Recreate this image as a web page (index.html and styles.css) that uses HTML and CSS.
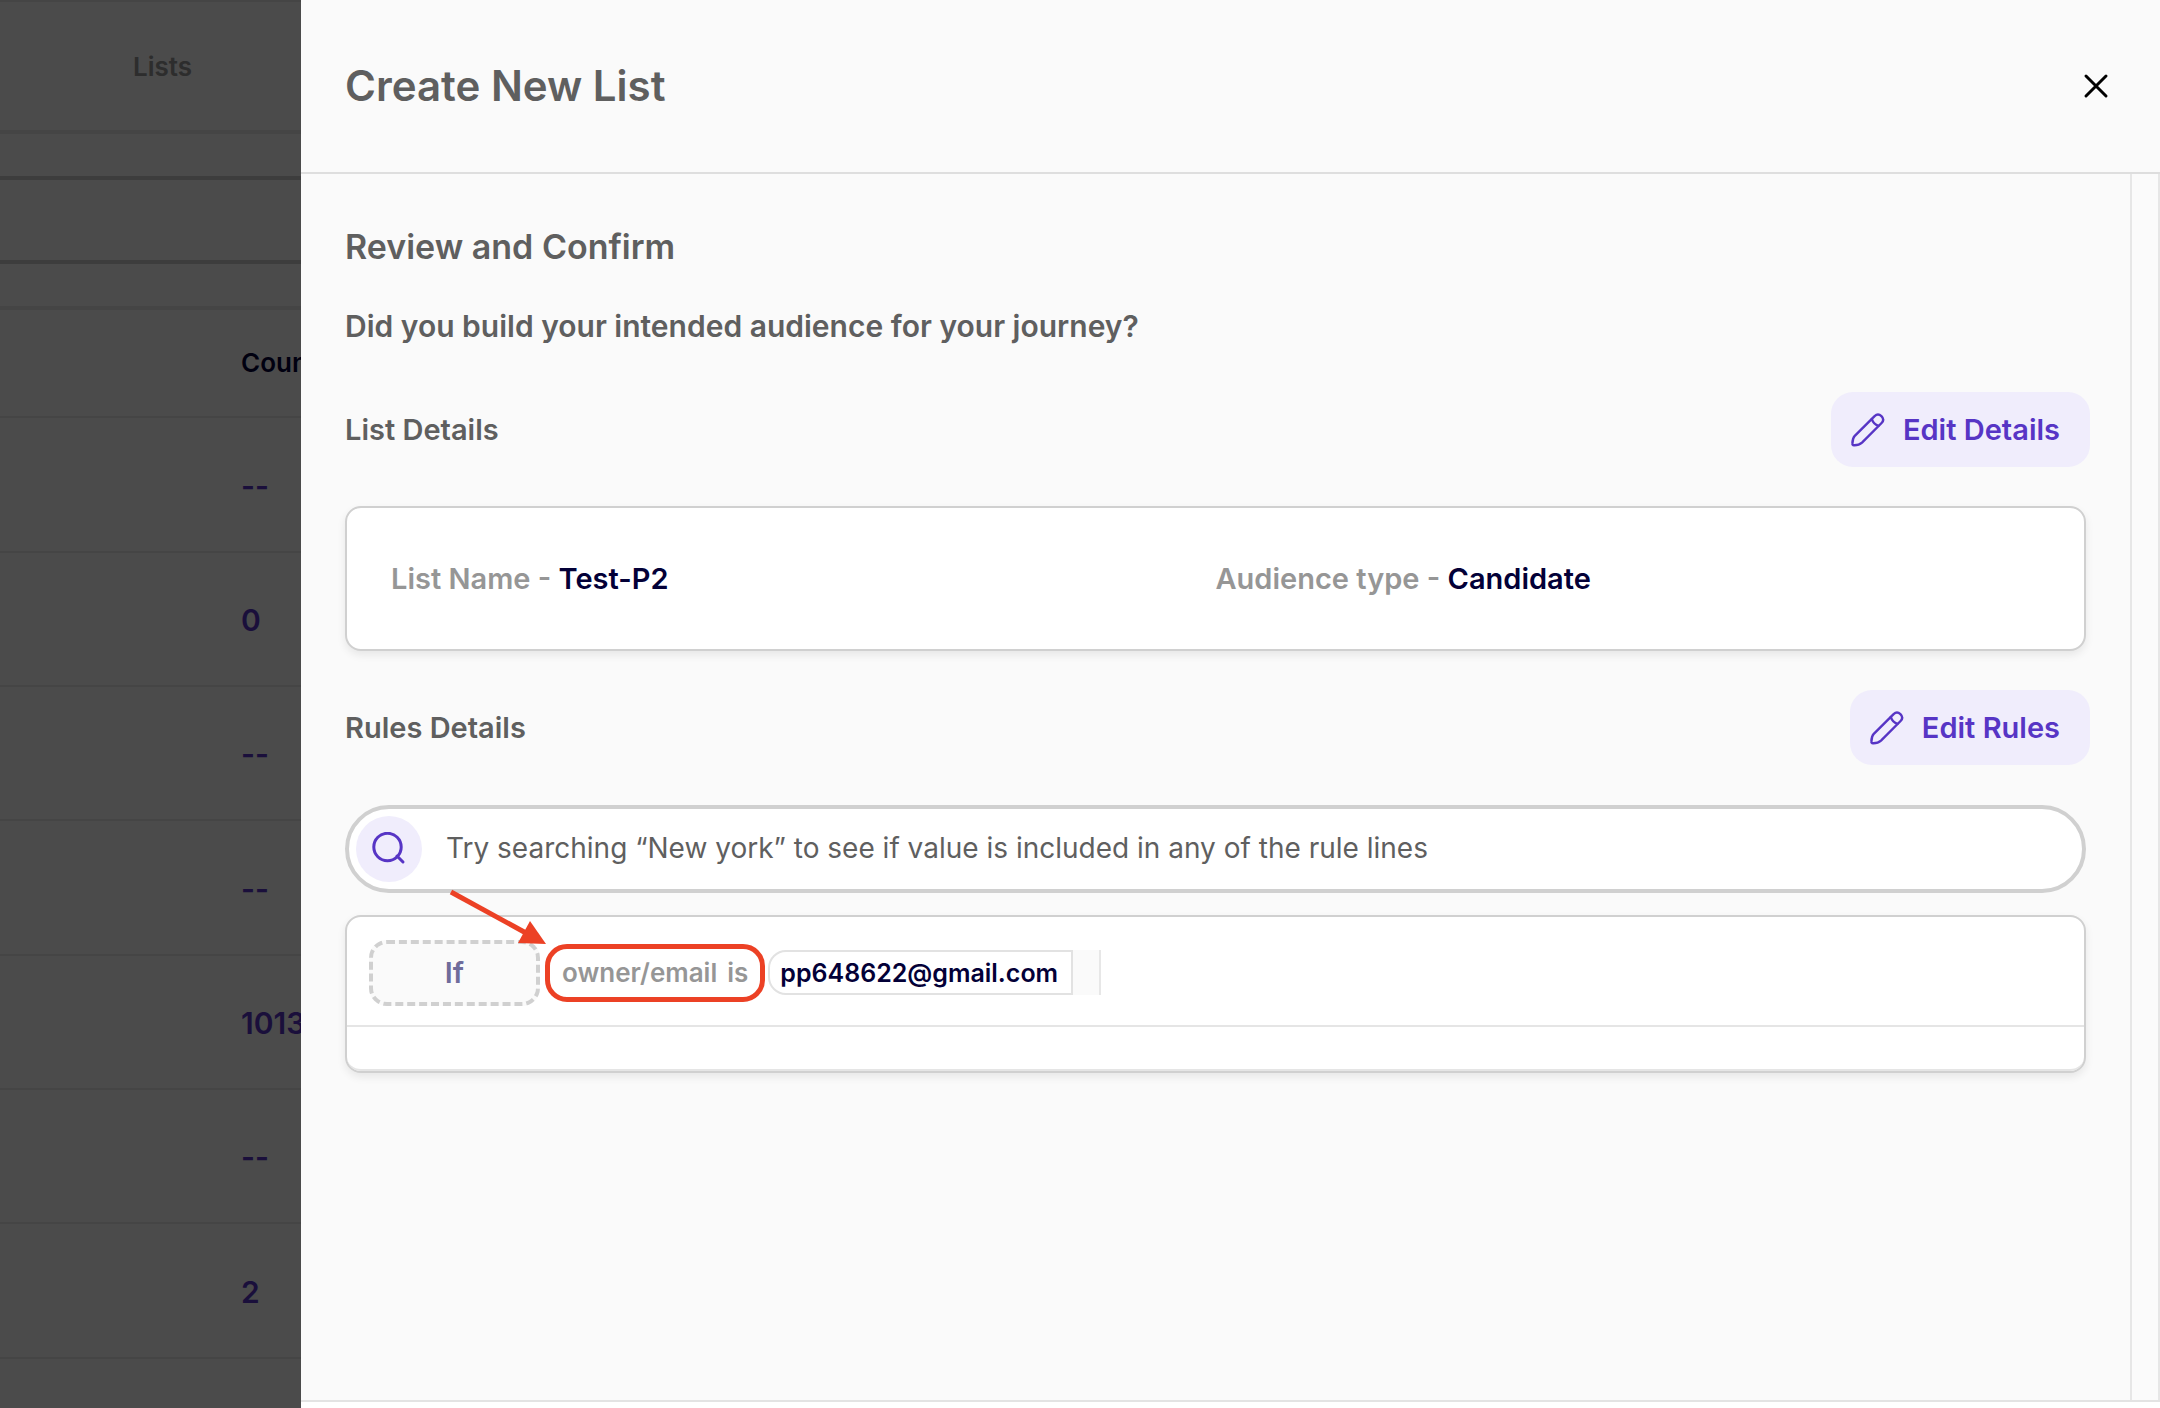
FILE: index.html
```html
<!DOCTYPE html>
<html lang="en">
<head>
<meta charset="utf-8">
<title>Create New List</title>
<link rel="stylesheet" href="styles.css">
</head>
<body>
<svg class="sprite" aria-hidden="true">
  <symbol id="pencil" viewBox="0 0 34 34">
    <g fill="none" stroke="currentColor" stroke-width="2.400" stroke-linejoin="round" stroke-linecap="round">
      <path d="M3.800 22.800 L23.600 3.200 C25.800 1.100 28.400 1.300 30.400 3.200 C32.600 5.400 32.600 8 30.600 10 L11 29.600 C8.800 31.600 6.500 32.400 3 32.300 C1.700 32.200 1.300 31.700 1.400 30.400 C1.500 27 2 24.800 3.800 22.800 Z"/>
      <path d="M20.800 6.200 C21.800 9.200 24.400 11.800 27.400 12.800"/>
    </g>
  </symbol>
</svg>

<main class="page">
  <nav class="tabs"><a class="tab" href="#lists">Lists</a></nav>
  <div class="filters"></div>
  <table class="lists">
    <thead><tr><th scope="col">Count</th></tr></thead>
    <tbody>
      <tr><td>--</td></tr>
      <tr><td>0</td></tr>
      <tr><td>--</td></tr>
      <tr><td>--</td></tr>
      <tr><td>1013</td></tr>
      <tr><td>--</td></tr>
      <tr><td>2</td></tr>
    </tbody>
  </table>
</main>
<div class="backdrop"></div>

<section class="drawer" role="dialog" aria-labelledby="drawer-title">
  <header class="drawer-head">
    <h1 class="title" id="drawer-title">Create New List</h1>
    <button class="close" type="button" aria-label="Close">
      <svg width="26" height="26" viewBox="0 0 26 26" fill="none" stroke="#000" stroke-width="3" stroke-linecap="round"><path d="M3 3 L23 23 M23 3 L3 23"/></svg>
    </button>
  </header>

  <div class="drawer-body">
    <div class="content">
      <h2 class="subtitle">Review and Confirm</h2>
      <p class="question">Did you build your intended audience for your journey?</p>

      <div class="section-head">
        <h3 class="section-title">List Details</h3>
        <button class="edit" type="button"><svg class="edit-icon" aria-hidden="true"><use href="#pencil"/></svg>Edit Details</button>
      </div>
      <div class="card details">
        <p class="detail">List Name - <strong class="value">Test-P2</strong></p>
        <p class="detail">Audience type - <strong class="value">Candidate</strong></p>
      </div>

      <div class="section-head rules-head">
        <h3 class="section-title">Rules Details</h3>
        <button class="edit" type="button"><svg class="edit-icon" aria-hidden="true"><use href="#pencil"/></svg>Edit Rules</button>
      </div>
      <label class="search">
        <span class="search-badge">
          <svg width="34" height="34" viewBox="0 0 34 34" fill="none" stroke="#5735c5" stroke-width="3" aria-label="Search"><circle cx="15.500" cy="15" r="13.700"/><path d="M25 24 L31 30" stroke-linecap="round"/></svg>
        </span>
        <input class="search-input" type="text" placeholder="Try searching “New york” to see if value is included in any of the rule lines">
      </label>

      <div class="card rules">
        <div class="rule">
          <span class="if">If</span>
          <span class="highlight">
            <span>owner/email</span><span>is</span>
            <svg class="arrow" viewBox="0 0 100 60" aria-hidden="true"><path d="M5 7 L80 48" stroke="#ec4125" stroke-width="5"/><path d="M100 59 L84 36 L72 58 Z" fill="#ec4125"/></svg>
          </span>
          <span class="chip">pp648622@gmail.com</span><span class="chip-end"></span>
        </div>
        <div class="rule-empty"></div>
      </div>
    </div>
    <div class="scroll-track"></div>
  </div>
  <footer class="drawer-foot"></footer>
</section>
</body>
</html>
```
FILE: styles.css
```css
* { box-sizing: border-box; }

body {
  margin: 0;
  height: 100vh;
  overflow: hidden;
  background: #fafafa;
  color: #5f5f5f;
  font-family: Inter, "Liberation Sans", sans-serif;
  font-weight: 600;
}

h1, h2, h3, p { margin: 0; font-weight: 600; }
button, input { font: inherit; }
.sprite { display: none; }

/* List page behind the drawer */
.tabs {
  display: flex;
  align-items: center;
  height: 134px;
  padding-left: 133px;
  border-top: 2px solid #e6e6e6;
  border-bottom: 4px solid #e6e6e6;
}
.tab { color: #969696; font-size: 26px; text-decoration: none; }
.filters {
  height: 88px;
  margin: 42px 0;
  border-top: 4px solid #ccc;
  border-bottom: 4px solid #ccc;
}
.lists {
  width: 100%;
  border-top: 4px solid #e6e6e6;
  border-spacing: 0;
  text-align: left;
}
.lists th, .lists td { padding: 0 0 0 241px; border-bottom: 2px solid #e6e6e6; }
.lists th { height: 108px; padding-bottom: 2px; color: #030037; font-size: 26px; font-weight: 600; }
.lists td { height: 134px; padding-top: 2px; color: #5735c5; font-size: 30px; font-weight: 600; }
.lists tr:nth-child(3n+1) td { height: 135px; }
.backdrop { position: fixed; inset: 0; background: rgba(0, 0, 0, .7); }

/* Drawer */
.drawer {
  position: fixed;
  inset: 0 0 0 301px;
  display: flex;
  flex-direction: column;
  background: #fafafa;
}
.drawer-head {
  display: flex;
  align-items: center;
  justify-content: space-between;
  height: 174px;
  padding: 0 51px 0 44px;
  border-bottom: 2px solid #dedede;
}
.title { font-size: 42px; line-height: 52px; }
.close { display: flex; padding: 0; border: 0; background: none; cursor: pointer; }
.drawer-body { display: flex; flex: 1; min-height: 0; }
.content { flex: 1; padding: 52px 40px 0 44px; }
.scroll-track {
  width: 30px;
  border: solid #e7e7e7;
  border-width: 0 2px;
  background: #fbfbfb;
}
.drawer-foot { height: 8px; border-top: 2px solid #e3e3e3; background: #fff; }

.subtitle { font-size: 34px; line-height: 42px; }
.question { margin-top: 40px; font-size: 30px; line-height: 36px; }

.section-head {
  display: flex;
  align-items: center;
  justify-content: space-between;
  margin-top: 48px;
}
.rules-head { margin-top: 39px; }
.section-title { font-size: 29px; line-height: 36px; }
.edit {
  display: flex;
  align-items: center;
  height: 75px;
  padding: 0 30px 0 20px;
  border: 0;
  border-radius: 22px;
  background: #f0edfc;
  color: #5735c5;
  font-size: 29px;
  font-weight: 600;
  gap: 18px;
  cursor: pointer;
}
.edit-icon { width: 34px; height: 34px; }

.card {
  margin-right: 4px;
  border: 2px solid #d0d0d0;
  border-radius: 16px;
  background: #fff;
  box-shadow: 0 4px 8px rgba(0, 0, 0, .08);
}
.details {
  display: grid;
  grid-template-columns: 1fr 1fr;
  align-items: center;
  height: 145px;
  margin-top: 39px;
  padding: 0 44px;
}
.detail { color: #969696; font-size: 29px; line-height: 36px; }
.value { color: #030037; font-weight: 600; }

.search {
  display: flex;
  align-items: center;
  height: 88px;
  margin: 40px 4px 22px 0;
  padding: 0 7px;
  border: 4px solid #d0d0d0;
  border-radius: 44px;
  background: #fff;
  gap: 24px;
}
.search-badge {
  display: flex;
  align-items: center;
  justify-content: center;
  width: 66px;
  height: 66px;
  border-radius: 50%;
  background: #f0edfc;
}
.search-input {
  flex: 1;
  padding: 0 0 2px;
  border: 0;
  outline: 0;
  background: none;
  font-size: 28px;
  font-weight: 400;
}
.search-input::placeholder { color: #5f5f5f; opacity: 1; }

.rule {
  display: flex;
  align-items: center;
  height: 110px;
  padding: 3px 22px 0;
  border-bottom: 2px solid #e5e5e5;
}
.rule-empty { height: 44px; border-bottom: 2px solid #e5e5e5; border-radius: 0 0 14px 14px; }
.if {
  display: flex;
  align-items: center;
  justify-content: center;
  width: 171px;
  height: 66px;
  margin-right: 5px;
  border: 4px dashed #d0d0d0;
  border-radius: 18px;
  background: #fafafa;
  color: #6f6c9b;
  font-size: 29px;
}
.highlight {
  position: relative;
  display: flex;
  align-items: center;
  height: 58px;
  margin-right: 3px;
  padding: 0 12px;
  border: 5px solid #ec4125;
  border-radius: 22px;
  color: #969696;
  font-size: 26px;
  gap: 10px;
}
/* Callout arrow ends at the top left corner of the highlight */
.arrow { position: absolute; right: 100%; bottom: 100%; width: 100px; height: 60px; margin: 0 4px 4px 0; }
.chip {
  display: flex;
  align-items: center;
  height: 45px;
  padding: 0 13px 0 10px;
  border: 2px solid #e2e2e2;
  border-radius: 18px 0 0 18px;
  color: #030037;
  font-size: 25px;
  font-weight: 600;
}
.chip-end { width: 28px; height: 45px; border-right: 2px solid #e7e7e7; background: #fafafa; }
```
